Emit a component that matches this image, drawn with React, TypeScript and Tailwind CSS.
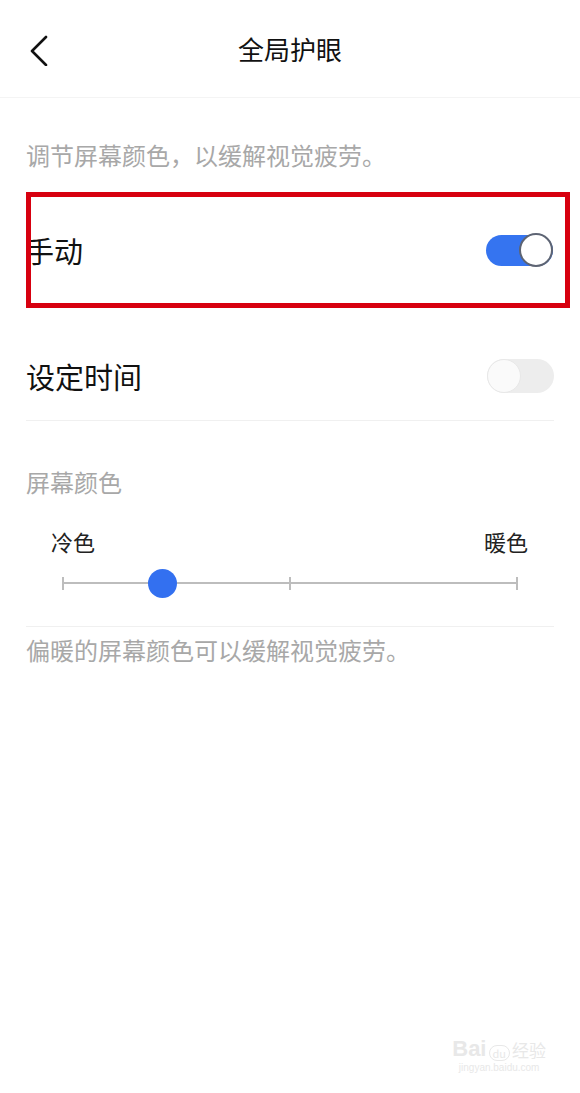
import React from "react";

const cjk = { fontFamily: '"Noto Sans CJK SC", "Noto Sans", sans-serif' };

function Toggle({ on }: { on: boolean }) {
  return on ? (
    <div className="relative flex h-[34px] w-[67px] items-center">
      <div className="h-[31px] w-full rounded-full bg-[#3574f0]" />
      <div className="absolute right-0 top-0 h-[34px] w-[34px] rounded-full border-2 border-[#5d6473] bg-white" />
    </div>
  ) : (
    <div className="relative h-[34px] w-[67px] rounded-full bg-[#ededed]">
      <div className="absolute left-0 top-0 h-[34px] w-[34px] rounded-full border border-[#e8e8e8] bg-[#fafafa]" />
    </div>
  );
}

export default function App() {
  return (
    <div className="relative min-h-[1093px] w-[580px] bg-white text-[#111]" style={cjk}>
      {/* header */}
      <div className="relative flex h-[98px] items-center justify-center border-b border-[#f4f4f4]">
        <svg className="absolute left-[28px] top-[34px]" width="24" height="32" viewBox="0 0 24 32" fill="none">
          <polyline points="18,3 4,17 18,31" stroke="#111" strokeWidth="2.6" strokeLinecap="round" strokeLinejoin="round" />
        </svg>
        <h1 className="text-[26px] leading-[32px]">全局护眼</h1>
      </div>

      <p className="mt-[41px] px-[26px] text-[24px] leading-[32px] text-[#a8a8a8]">调节屏幕颜色，以缓解视觉疲劳。</p>

      {/* highlighted row */}
      <div className="ml-[26px] mr-[10px] mt-[21px] flex h-[116px] items-center justify-between overflow-hidden border-[5px] border-[#d7000f] pr-[12px]">
        <span className="-ml-[6px] text-[29px] leading-[34px]">手动</span>
        <Toggle on />
      </div>

      <div className="mx-[26px] mt-[34px] flex h-[68px] items-center justify-between">
        <span className="text-[29px] leading-[34px]">设定时间</span>
        <Toggle on={false} />
      </div>
      <div className="mx-[26px] mt-[10px] h-px bg-[#f0f0f0]" />

      <p className="mt-[45px] px-[26px] text-[24px] leading-[32px] text-[#a8a8a8]">屏幕颜色</p>

      <div className="mt-[27px] flex justify-between pl-[51px] pr-[52px] text-[22px] leading-[32px] text-[#222]">
        <span>冷色</span>
        <span>暖色</span>
      </div>

      {/* slider */}
      <div className="mt-[10px] px-[62px]">
        <div className="relative h-[32px]">
          <div className="absolute left-0 right-0 top-[15px] h-[2px] bg-[#bdbdbd]" />
          <div className="absolute left-0 top-[10px] h-[13px] w-[2px] bg-[#bdbdbd]" />
          <div className="absolute left-[227px] top-[10px] h-[13px] w-[2px] bg-[#bdbdbd]" />
          <div className="absolute right-0 top-[10px] h-[13px] w-[2px] bg-[#bdbdbd]" />
          <div className="absolute left-[86px] top-[2px] h-[29px] w-[29px] rounded-full bg-[#3370f0]" />
        </div>
      </div>

      <div className="mx-[26px] mt-[27px] h-px bg-[#f0f0f0]" />

      <p className="mt-[7px] px-[26px] text-[24px] leading-[32px] text-[#a8a8a8]">偏暖的屏幕颜色可以缓解视觉疲劳。</p>

      {/* watermark */}
      <div className="absolute bottom-[18px] right-[34px] flex flex-col items-center text-[#e8e8e8]">
        <div className="flex items-end gap-[2px]">
          <span className="text-[22px] font-bold leading-[24px]" style={{ fontFamily: '"Liberation Sans", sans-serif' }}>Bai</span>
          <span className="rounded-full border border-[#e8e8e8] px-[3px] text-[11px] leading-[14px]">du</span>
          <span className="text-[17px] leading-[22px]">经验</span>
        </div>
        <span className="text-[10px] leading-[14px]" style={{ fontFamily: '"Liberation Sans", sans-serif' }}>jingyan.baidu.com</span>
      </div>
    </div>
  );
}
